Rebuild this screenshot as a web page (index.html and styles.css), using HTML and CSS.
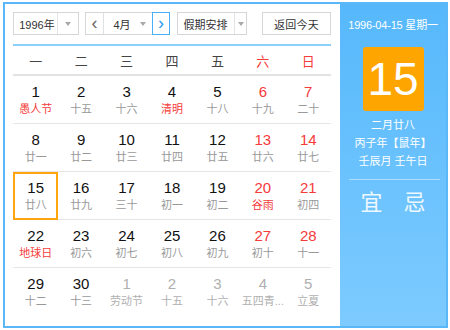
FILE: index.html
```html
<!DOCTYPE html>
<html lang="zh">
<head>
<meta charset="utf-8">
<link rel="stylesheet" href="styles.css">
</head>
<body>
<div class="cal">
  <div class="main">
    <div class="controls">
      <div class="select year"><span class="val">1996年</span><span class="arr"></span></div>
      <div class="month-group">
        <span class="nav prev">&lsaquo;</span>
        <div class="month"><span class="val">4月</span><span class="arr"></span></div>
        <span class="nav next">&rsaquo;</span>
      </div>
      <div class="select holiday"><span class="val">假期安排</span><span class="arr"></span></div>
      <div class="today">返回今天</div>
    </div>
    <div class="grid">
      <div class="wd">一</div><div class="wd">二</div><div class="wd">三</div><div class="wd">四</div><div class="wd">五</div><div class="wd red">六</div><div class="wd red">日</div>

      <div class="day"><b>1</b><i class="fest">愚人节</i></div>
      <div class="day"><b>2</b><i>十五</i></div>
      <div class="day"><b>3</b><i>十六</i></div>
      <div class="day"><b>4</b><i class="fest">清明</i></div>
      <div class="day"><b>5</b><i>十八</i></div>
      <div class="day we"><b>6</b><i>十九</i></div>
      <div class="day we"><b>7</b><i>二十</i></div>

      <div class="day"><b>8</b><i>廿一</i></div>
      <div class="day"><b>9</b><i>廿二</i></div>
      <div class="day"><b>10</b><i>廿三</i></div>
      <div class="day"><b>11</b><i>廿四</i></div>
      <div class="day"><b>12</b><i>廿五</i></div>
      <div class="day we"><b>13</b><i>廿六</i></div>
      <div class="day we"><b>14</b><i>廿七</i></div>

      <div class="day cur"><b>15</b><i>廿八</i></div>
      <div class="day"><b>16</b><i>廿九</i></div>
      <div class="day"><b>17</b><i>三十</i></div>
      <div class="day"><b>18</b><i>初一</i></div>
      <div class="day"><b>19</b><i>初二</i></div>
      <div class="day we"><b>20</b><i class="fest">谷雨</i></div>
      <div class="day we"><b>21</b><i>初四</i></div>

      <div class="day"><b>22</b><i class="fest">地球日</i></div>
      <div class="day"><b>23</b><i>初六</i></div>
      <div class="day"><b>24</b><i>初七</i></div>
      <div class="day"><b>25</b><i>初八</i></div>
      <div class="day"><b>26</b><i>初九</i></div>
      <div class="day we"><b>27</b><i>初十</i></div>
      <div class="day we"><b>28</b><i>十一</i></div>

      <div class="day last"><b>29</b><i>十二</i></div>
      <div class="day last"><b>30</b><i>十三</i></div>
      <div class="day last other"><b>1</b><i>劳动节</i></div>
      <div class="day last other"><b>2</b><i>十五</i></div>
      <div class="day last other"><b>3</b><i>十六</i></div>
      <div class="day last other"><b>4</b><i>五四青...</i></div>
      <div class="day last other"><b>5</b><i>立夏</i></div>
    </div>
  </div>
  <div class="side">
    <div class="date">1996-04-15 星期一</div>
    <div class="big">15</div>
    <div class="lunar">
      <div>二月廿八</div>
      <div>丙子年【鼠年】</div>
      <div>壬辰月 壬午日</div>
    </div>
    <div class="sep"></div>
    <div class="yiji"><span>宜</span><span>忌</span></div>
  </div>
</div>
</body>
</html>
```

FILE: styles.css
```css
html, body {
  margin: 0;
  padding: 0;
  background: #fff;
}
body {
  font-family: "Liberation Sans", "Noto Sans CJK SC", sans-serif;
  color: #222;
}
.cal {
  margin: 2px 0 0 3px;
  width: 445px;
  height: 326px;
  box-sizing: border-box;
  border: 2px solid #5ab8f8;
  display: flex;
}
.main {
  width: 335px;
  box-sizing: border-box;
  padding: 8px 9px 0 8px;
  background: #fff;
}
.controls {
  display: flex;
  align-items: stretch;
  height: 23px;
  font-size: 11px;
  color: #333;
}
.select, .month-group, .today {
  box-sizing: border-box;
  border: 1px solid #d6d6d6;
  display: flex;
  align-items: center;
  background: #fff;
}
.select .val {
  flex: 1;
  text-align: center;
}
.arr {
  width: 20px;
  align-self: stretch;
  border-left: 1px solid #e4e4e4;
  display: flex;
  align-items: center;
  justify-content: center;
}
.arr::after {
  content: "";
  border-left: 3.5px solid transparent;
  border-right: 3.5px solid transparent;
  border-top: 4px solid #a8a8a8;
}
.year { width: 66px; }
.year .val { padding-left: 3px; }
.month-group {
  width: 85px;
  margin-left: 6px;
  border-right: none;
}
.nav {
  width: 18px;
  align-self: stretch;
  display: flex;
  align-items: center;
  justify-content: center;
  font-size: 18px;
  color: #666;
  line-height: 1;
  padding-bottom: 2px;
  box-sizing: border-box;
}
.prev {
  border-right: 1px solid #e0e0e0;
}
.next {
  border: 1px solid #4ab0f5;
  margin: -1px 0;
  align-self: auto;
  height: 23px;
  color: #2d9bf0;
}
.month {
  flex: 1;
  display: flex;
  align-items: center;
}
.month .val {
  flex: 1;
  text-align: center;
  padding-left: 6px;
}
.month .arr {
  border-left: none;
  width: 18px;
}
.holiday {
  width: 70px;
  margin-left: 7px;
}
.holiday .arr { width: 11px; }
.holiday .val { letter-spacing: 0; padding-right: 1px; }
.today {
  width: 69px;
  margin-left: 15px;
  justify-content: center;
  letter-spacing: 0.3px;
}
.grid {
  margin-top: 9px;
  border-top: 2px solid #8ccffb;
  display: grid;
  grid-template-columns: repeat(7, 1fr);
  grid-auto-rows: 48px;
  grid-template-rows: 30px;
}
.wd {
  box-sizing: border-box;
  border-bottom: 2px solid #e2e2e2;
  display: flex;
  align-items: center;
  justify-content: center;
  font-size: 13px;
  color: #444;
  padding-top: 1px;
}
.wd.red { color: #f53a3a; }
.day {
  box-sizing: border-box;
  border-bottom: 1px solid #e6e6e6;
  display: flex;
  flex-direction: column;
  align-items: center;
  padding-top: 7px;
}
.day.last { border-bottom: none; }
.day b {
  font-weight: normal;
  font-size: 15px;
  line-height: 18px;
  color: #111;
}
.day i {
  font-style: normal;
  font-size: 11px;
  line-height: 16px;
  color: #999;
  white-space: nowrap;
}
.day.we b { color: #f53a3a; }
.day i.fest { color: #f53a3a; }
.day.other b, .day.other i { color: #b0b0b0; }
.day.cur {
  border: 2px solid #ffa60f;
  padding-top: 5px;
}
.side {
  flex: 1;
  background: linear-gradient(#56b8fb, #7dcbff);
  color: #fff;
  display: flex;
  flex-direction: column;
  align-items: center;
  padding-top: 13px;
}
.date {
  font-size: 11px;
  line-height: 16px;
  white-space: nowrap;
  letter-spacing: -0.2px;
}
.big {
  margin-top: 14px;
  width: 61px;
  height: 64px;
  background: #ffa500;
  border-radius: 3px;
  display: flex;
  align-items: center;
  justify-content: center;
  font-size: 46px;
  line-height: 1;
}
.lunar {
  margin-top: 5px;
  font-size: 11px;
  line-height: 18px;
  text-align: center;
}
.sep {
  margin-top: 9px;
  width: 91px;
  height: 1px;
  background: rgba(255,255,255,0.45);
  margin-left: 2px;
}
.yiji {
  margin-top: 8px;
  display: flex;
  gap: 21px;
  font-size: 22px;
  line-height: 30px;
  color: #eef8ff;
}
```
